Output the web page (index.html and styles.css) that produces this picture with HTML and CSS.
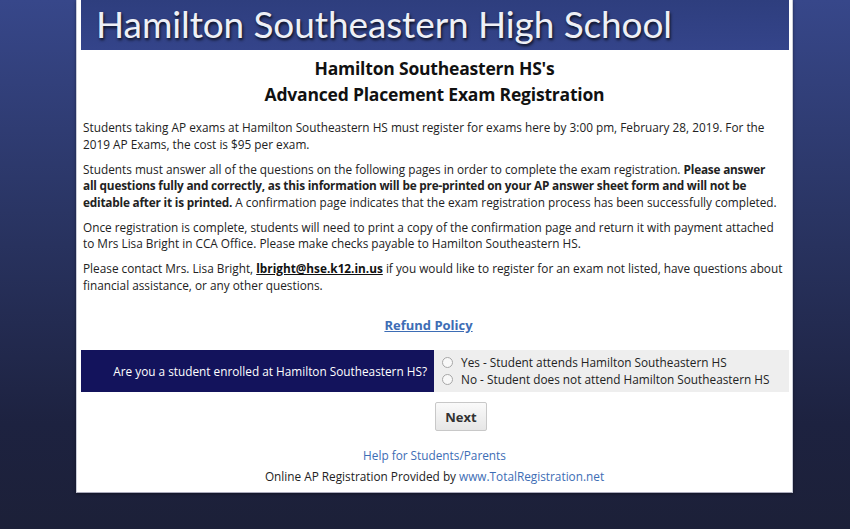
FILE: index.html
```html
<!DOCTYPE html>
<html lang="en">
<head>
    <meta charset="UTF-8">
    <title>AP Exam Registration</title>
    <link rel="stylesheet" href="styles.css">
</head>
<body>

<div class="page">
    <div class="banner">Hamilton Southeastern High School</div>

    <h1>Hamilton Southeastern HS's<br>Advanced Placement Exam Registration</h1>

    <div class="intro">
        <p>Students taking AP exams at Hamilton Southeastern HS must register for exams here by 3:00 pm, February 28, 2019. For the 2019 AP Exams, the cost is $95 per exam.</p>
        <p>Students must answer all of the questions on the following pages in order to complete the exam registration. <strong>Please answer all&nbsp;questions fully and correctly, as this information will be pre-printed on your AP answer sheet form and will not be editable after it is printed.</strong> A confirmation page indicates that the exam registration process has been successfully completed.</p>
        <p>Once registration is complete, students will need to print a copy of the confirmation page and return it with payment attached to Mrs Lisa Bright in CCA Office. Please make checks payable to Hamilton Southeastern HS.</p>
        <p>Please contact Mrs. Lisa Bright, <a class="mail" href="#">lbright@hse.k12.in.us</a> if you would like to register for an exam not listed, have questions about financial assistance, or any other questions.</p>
    </div>

    <div class="refund"><a href="#">Refund Policy </a></div>

    <form>
        <div class="question">
            <div class="q-label">Are you a student enrolled at Hamilton Southeastern HS?</div>
            <div class="q-options">
                <label><input type="radio" name="enrolled"> Yes - Student attends Hamilton Southeastern HS</label>
                <label><input type="radio" name="enrolled"> No - Student does not attend Hamilton Southeastern HS</label>
            </div>
        </div>
        <div class="actions">
            <button type="button" class="next">Next</button>
        </div>
    </form>

    <div class="footer">
        <p><a href="#">Help for Students/Parents</a></p>
        <p>Online AP Registration Provided by <a href="#">www.TotalRegistration.net</a></p>
    </div>
</div>

</body>
</html>
```

FILE: styles.css
```css
html {
    background: #1c2038;
}
body {
    margin: 0;
    min-height: 529px;
    font-family: "Open Sans", Arial, sans-serif;
    font-size: 11.8px;
    color: #222;
    background: linear-gradient(to bottom, #37478a 0%, #2a3564 40%, #1d2240 80%, #1c2038 100%);
}
.page {
    width: 709px;
    margin: 0 0 0 76px;
    padding: 0 3px 3px 3px;
    background: #fff;
    border-left: 1px solid #c9ccd8;
    border-right: 1px solid #c9ccd8;
    border-bottom: 1px solid #aab;
    box-shadow: 0 1px 3px rgba(0, 0, 0, 0.4);
}
.banner {
    margin: 0 0 0 1px;
    height: 50px;
    padding-left: 15px;
    background: linear-gradient(to bottom, #2e3e7e, #34448a);
    color: #eef0f6;
    font-family: Lato, "Open Sans", sans-serif;
    font-size: 37px;
    line-height: 48px;
    letter-spacing: -0.1px;
    text-shadow: 1px 2px 3px rgba(0, 0, 0, 0.8);
}
h1 {
    margin: 5px 0 12px;
    text-align: center;
    font-size: 17.5px;
    line-height: 26px;
    font-weight: bold;
    letter-spacing: -0.2px;
    color: #111;
}
.intro {
    padding: 0 3px;
}
.intro p {
    margin: 0 0 8.5px;
    line-height: 16.5px;
}
.intro strong {
    letter-spacing: -0.2px;
}
.mail {
    color: #111;
    font-weight: bold;
}
.refund {
    margin-top: 23px;
    padding-right: 12px;
    text-align: center;
    font-size: 13px;
    font-weight: bold;
}
.refund a {
    color: #3d6db5;
}
form {
    margin-top: 16px;
}
.question {
    display: flex;
    margin-left: 1px;
    height: 42px;
}
.q-label {
    width: 346px;
    padding-right: 7px;
    display: flex;
    align-items: center;
    justify-content: flex-end;
    background: #13135c;
    color: #fff;
}
.q-options {
    flex: 1;
    background: #eeeeee;
    padding: 4px 0 0 8px;
    display: flex;
    flex-direction: column;
    color: #222;
}
.q-options label {
    line-height: 17px;
}
.q-options input {
    margin: 0 5px 0 0;
    width: 11px;
    height: 11px;
    vertical-align: -1px;
    opacity: 0.6;
}
.actions {
    text-align: center;
    padding: 10px 0 0 53px;
}
.next {
    font-family: "Open Sans", Arial, sans-serif;
    font-size: 13px;
    font-weight: bold;
    color: #333;
    width: 52px;
    height: 29px;
    border: 1px solid #c8c8c8;
    border-radius: 2px;
    background: linear-gradient(to bottom, #fafafa, #e6e6e6);
}
.footer {
    margin-top: 16px;
    text-align: center;
}
.footer p {
    margin: 0 0 5px;
    line-height: 16px;
}
.footer a {
    color: #3d6db5;
    text-decoration: none;
}
```
